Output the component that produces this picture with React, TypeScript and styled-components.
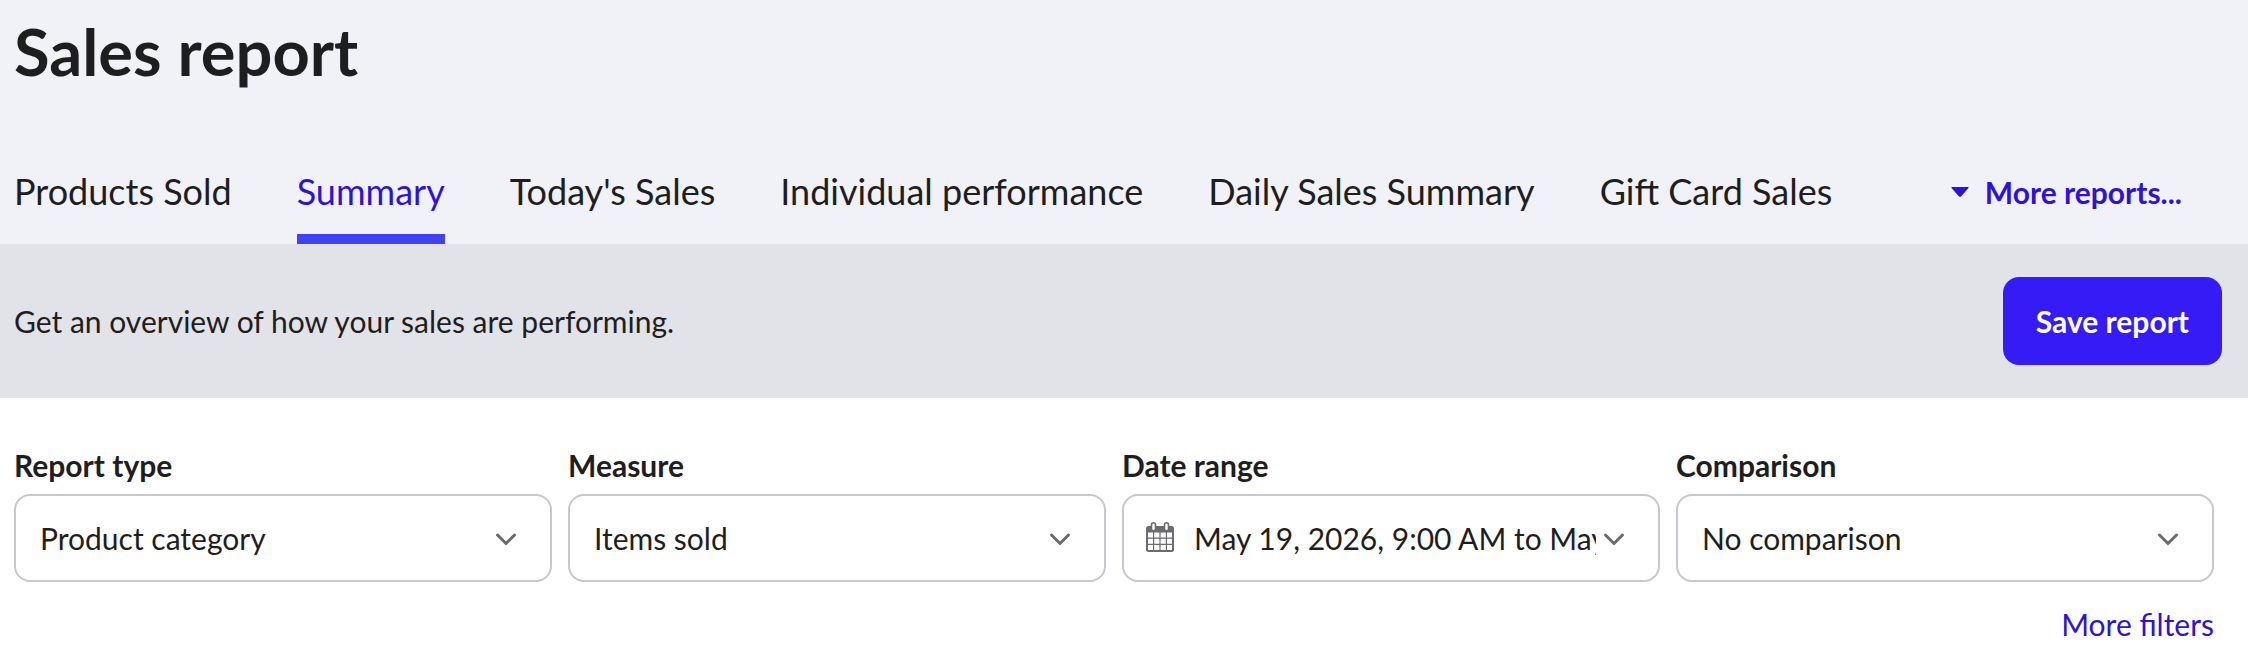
import React from "react";
import styled, { createGlobalStyle, css } from "styled-components";

const color = {
  text: "#1e1e20",
  link: "#2f12d9",
  primary: "#351bf5",
  underline: "#4141f6",
  headerBg: "#f1f2f8",
  bannerBg: "#e2e3e8",
  border: "#c8c7ce",
  icon: "#6b6a70",
};

const GlobalStyle = createGlobalStyle`
  *, *::before, *::after { box-sizing: border-box; }
  body {
    margin: 0;
    background: #ffffff;
    color: ${color.text};
    font-family: Lato, "Liberation Sans", sans-serif;
    font-size: 30px;
    line-height: 40px;
  }
`;

const Header = styled.header`
  padding: 11px 66px 0 14px;
  background: ${color.headerBg};
`;

const Title = styled.h1`
  margin: 0 0 68px;
  font-size: 65px;
  line-height: 80px;
  font-weight: 700;
`;

const TabBar = styled.div`
  display: flex;
  align-items: flex-start;
  justify-content: space-between;
`;

const Tabs = styled.nav`
  display: flex;
  gap: 65px;
`;

const Tab = styled.a<{ $active?: boolean }>`
  padding: 8px 0 19px;
  border-bottom: 10px solid transparent;
  color: ${color.text};
  font-size: 36px;
  line-height: 48px;
  text-decoration: none;
  white-space: nowrap;
  ${(p) =>
    p.$active &&
    css`
      border-color: ${color.underline};
      color: ${color.link};
    `}
`;

const MoreReports = styled.button`
  display: flex;
  align-items: center;
  gap: 16px;
  margin: 0;
  padding: 13px 0;
  border: 0;
  background: none;
  color: ${color.link};
  font: inherit;
  font-weight: 700;
  white-space: nowrap;
  cursor: pointer;
`;

const Banner = styled.section`
  display: flex;
  align-items: center;
  justify-content: space-between;
  padding: 33px 26px 33px 14px;
  background: ${color.bannerBg};
`;

const Description = styled.p`
  margin: 0;
`;

const SaveButton = styled.button`
  padding: 24px 33px;
  border: 0;
  border-radius: 16px;
  background: ${color.primary};
  color: #ffffff;
  font: inherit;
  font-weight: 700;
  white-space: nowrap;
  cursor: pointer;
`;

const Filters = styled.form`
  padding: 47px 34px 16px 14px;
`;

const FilterGrid = styled.div`
  display: grid;
  grid-template-columns: repeat(4, minmax(0, 1fr));
  gap: 16px;
`;

const Field = styled.div`
  display: flex;
  flex-direction: column;
  gap: 9px;
`;

const Label = styled.label`
  font-weight: 700;
`;

const SelectBox = styled.div`
  position: relative;
`;

const Select = styled.select<{ $withIcon?: boolean }>`
  display: block;
  width: 100%;
  height: 88px;
  margin: 0;
  padding: 0 62px 0 ${(p) => (p.$withIcon ? 70 : 24)}px;
  appearance: none;
  border: 2px solid ${color.border};
  border-radius: 16px;
  background: #ffffff;
  color: ${color.text};
  font: inherit;
  text-overflow: clip;
  cursor: pointer;
`;

const Adornment = styled.span<{ $side: "left" | "right" }>`
  position: absolute;
  top: 0;
  bottom: 0;
  ${(p) => (p.$side === "left" ? "left: 24px;" : "right: 34px;")}
  display: flex;
  align-items: center;
  color: ${color.icon};
  pointer-events: none;
`;

const FilterFooter = styled.div`
  display: flex;
  justify-content: flex-end;
  padding-top: 22px;
`;

const MoreFilters = styled.a`
  color: ${color.link};
  text-decoration: none;
`;

const CaretIcon = () => (
  <svg width="18" height="10" viewBox="0 0 18 10" aria-hidden="true">
    <path d="M1 0H17Q18 0 17.5 1L10 9.4Q9 10 8 9.4L.5 1Q0 0 1 0Z" fill="currentColor" />
  </svg>
);

const ChevronIcon = () => (
  <svg width="24" height="16" viewBox="0 0 24 16" aria-hidden="true">
    <path
      d="M3.5 5L12 13.5L20.5 5"
      fill="none"
      stroke="currentColor"
      strokeWidth="3"
      strokeLinecap="round"
    />
  </svg>
);

const CalendarIcon = () => (
  <svg width="28" height="32" viewBox="0 0 28 32" aria-hidden="true">
    <rect x="0" y="4" width="28" height="26" rx="2.5" fill="currentColor" />
    <path
      d="M2 10.5h5v5h-5zM8.2 10.5h5.2v5H8.2zM14.6 10.5h5.2v5h-5.2zM21 10.5h5v5h-5zM2 16.7h5v5h-5zM8.2 16.7h5.2v5H8.2zM14.6 16.7h5.2v5h-5.2zM21 16.7h5v5h-5zM2 22.9h5v5h-5zM8.2 22.9h5.2v5H8.2zM14.6 22.9h5.2v5h-5.2zM21 22.9h5v5h-5z"
      fill="#ffffff"
    />
    <rect x="5.5" y="0.8" width="4" height="8" rx="2" fill="#ffffff" stroke="currentColor" strokeWidth="1.6" />
    <rect x="18.5" y="0.8" width="4" height="8" rx="2" fill="#ffffff" stroke="currentColor" strokeWidth="1.6" />
  </svg>
);

const tabs = [
  "Products Sold",
  "Summary",
  "Today's Sales",
  "Individual performance",
  "Daily Sales Summary",
  "Gift Card Sales",
];

const filters = [
  { id: "report-type", label: "Report type", value: "Product category" },
  { id: "measure", label: "Measure", value: "Items sold" },
  {
    id: "date-range",
    label: "Date range",
    value: "May 19, 2026, 9:00 AM to May 20, 2026, 9:00 AM",
    icon: <CalendarIcon />,
  },
  { id: "comparison", label: "Comparison", value: "No comparison" },
];

export default function App() {
  return (
    <>
      <GlobalStyle />
      <Header>
        <Title>Sales report</Title>
        <TabBar>
          <Tabs aria-label="Reports">
            {tabs.map((name) => (
              <Tab
                key={name}
                href="#"
                $active={name === "Summary"}
                aria-current={name === "Summary" ? "page" : undefined}
              >
                {name}
              </Tab>
            ))}
          </Tabs>
          <MoreReports type="button">
            <CaretIcon />
            More reports...
          </MoreReports>
        </TabBar>
      </Header>
      <main>
        <Banner>
          <Description>Get an overview of how your sales are performing.</Description>
          <SaveButton type="button">Save report</SaveButton>
        </Banner>
        <Filters>
          <FilterGrid>
            {filters.map(({ id, label, value, icon }) => (
              <Field key={id}>
                <Label htmlFor={id}>{label}</Label>
                <SelectBox>
                  <Select id={id} $withIcon={Boolean(icon)}>
                    <option>{value}</option>
                  </Select>
                  {icon && <Adornment $side="left">{icon}</Adornment>}
                  <Adornment $side="right">
                    <ChevronIcon />
                  </Adornment>
                </SelectBox>
              </Field>
            ))}
          </FilterGrid>
          <FilterFooter>
            <MoreFilters href="#">More filters</MoreFilters>
          </FilterFooter>
        </Filters>
      </main>
    </>
  );
}
